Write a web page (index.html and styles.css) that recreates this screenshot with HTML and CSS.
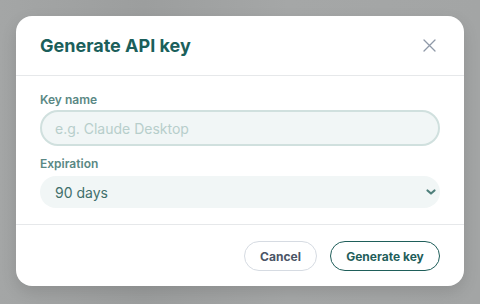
FILE: index.html
```html
<!DOCTYPE html>
<html lang="en">
<head>
  <meta charset="UTF-8" />
  <meta name="viewport" content="width=device-width, initial-scale=1.0"/>
  <title>Generate API key</title>
  <link rel="stylesheet" href="styles.css">
</head>
<body>
  <div class="modal">
    <div class="modal-header">
      <h2>Generate API key</h2>
      <button class="fechar" aria-label="Close">
        <svg width="13" height="13" viewBox="0 0 13 13"><path d="M1 1 L12 12 M12 1 L1 12" stroke="#8f99a8" stroke-width="1.3" stroke-linecap="round" fill="none"/></svg>
      </button>
    </div>

    <div class="modal-body">
      <div class="campo">
        <label for="nomeChave">Key name</label>
        <input id="nomeChave" type="text" placeholder="e.g. Claude Desktop">
      </div>
      <div class="campo">
        <label for="expiracao">Expiration</label>
        <div class="select-wrap">
          <select id="expiracao">
            <option>30 days</option>
            <option selected>90 days</option>
            <option>1 year</option>
            <option>Never</option>
          </select>
          <svg class="seta" width="12" height="8" viewBox="0 0 12 8"><path d="M2.5 2.5 L6 5.5 L9.5 2.5" stroke="#4f7f7b" stroke-width="2.2" stroke-linecap="round" stroke-linejoin="round" fill="none"/></svg>
        </div>
      </div>
    </div>

    <div class="modal-footer">
      <button class="btn cancelar">Cancel</button>
      <button class="btn gerar">Generate key</button>
    </div>
  </div>
</body>
</html>
```

FILE: styles.css
```css
* {
  box-sizing: border-box;
}
body {
  margin: 0;
  padding: 16px;
  font-family: Inter, "Open Sans", sans-serif;
  background: linear-gradient(to right, #a4a6a6, #9c9e9e 30%, #a5a7a7 60%, #a3a5a5);
  min-height: 304px;
}
.modal {
  width: 448px;
  background: #fff;
  border-radius: 16px;
  box-shadow: 0 6px 16px rgba(0, 0, 0, 0.12);
}
.modal-header {
  display: flex;
  align-items: center;
  justify-content: space-between;
  height: 60px;
  padding: 0 24px;
  border-bottom: 1px solid #e6e8ea;
}
.modal-header h2 {
  margin: 0;
  font-size: 18px;
  font-weight: 700;
  color: #1b5f5b;
}
.fechar {
  background: none;
  border: none;
  padding: 0;
  margin-right: 4px;
  display: flex;
  cursor: pointer;
}
.modal-body {
  padding: 16px 24px 16px;
}
.campo + .campo {
  margin-top: 10px;
}
.campo label {
  display: block;
  font-size: 12px;
  line-height: 16px;
  font-weight: 600;
  color: #5a8884;
  margin-bottom: 2px;
}
.campo + .campo label {
  margin-bottom: 4px;
}
.campo input {
  width: 100%;
  height: 36px;
  border: 2px solid #d0e0de;
  border-radius: 18px;
  background: #f1f6f6;
  padding: 0 13px;
  font-family: inherit;
  font-size: 14px;
  color: #3d6f6b;
  outline: none;
}
.campo input::placeholder {
  color: #b7cecb;
}
.select-wrap {
  position: relative;
}
.select-wrap select {
  width: 100%;
  height: 32px;
  border: none;
  border-radius: 16px;
  background: #f1f6f6;
  padding: 0 15px;
  font-family: inherit;
  font-size: 14px;
  color: #3f6f6b;
  appearance: none;
  -webkit-appearance: none;
  outline: none;
}
.seta {
  position: absolute;
  right: 3px;
  top: 12px;
  pointer-events: none;
}
.modal-footer {
  display: flex;
  justify-content: flex-end;
  gap: 13px;
  padding: 16px 24px 15px;
  border-top: 1px solid #e6e8ea;
}
.btn {
  height: 30px;
  border-radius: 15px;
  background: #fff;
  font-family: inherit;
  font-size: 12px;
  font-weight: 700;
  cursor: pointer;
}
.cancelar {
  width: 73px;
  border: 1px solid #d6dbe2;
  color: #4b5566;
}
.gerar {
  width: 110px;
  border: 1px solid #1f5e5a;
  color: #1f5e5a;
}
```
